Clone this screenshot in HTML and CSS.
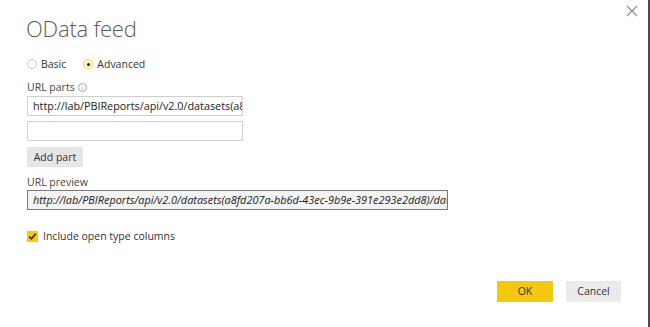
FILE: index.html
```html
<!DOCTYPE html>
<html>
<head>
<meta charset="utf-8">
<link rel="stylesheet" href="styles.css">
</head>
<body>
<div class="dialog">
  <div class="close" aria-label="Close">
    <svg width="12" height="12" viewBox="0 0 12 12"><path d="M1 1 L11 11 M11 1 L1 11" stroke="#8a8a8a" stroke-width="1.1" fill="none"/></svg>
  </div>
  <h1 class="title">OData feed</h1>
  <div class="radios">
    <label class="radio"><span class="dot"></span>Basic</label>
    <label class="radio sel"><span class="dot"><span class="inner"></span></span>Advanced</label>
  </div>
  <div class="label">URL parts <span class="info">i</span></div>
  <div class="input">http://lab/PBIReports/api/v2.0/datasets(a8fd207a-bb6d-43ec-9b9e-391e293e2dd8)</div>
  <div class="input empty"></div>
  <div class="addpart">Add part</div>
  <div class="label preview-label">URL preview</div>
  <div class="preview">http://lab/PBIReports/api/v2.0/datasets(a8fd207a-bb6d-43ec-9b9e-391e293e2dd8)/data</div>
  <label class="check">
    <span class="box"><svg width="11" height="11" viewBox="0 0 11 11"><path d="M2.2 5.6 L4.4 7.8 L8.8 2.8" stroke="#3a3000" stroke-width="1.6" fill="none"/></svg></span>
    Include open type columns
  </label>
  <div class="footer">
    <div class="btn ok">OK</div>
    <div class="btn cancel">Cancel</div>
  </div>
</div>
</body>
</html>
```

FILE: styles.css
```css
html, body {
  margin: 0;
  padding: 0;
  background: #ffffff;
}
.dialog {
  position: relative;
  width: 650px;
  height: 327px;
  box-sizing: border-box;
  border-right: 2px solid #4a4a4a;
  padding: 0 0 0 27px;
  font-family: "Open Sans", "Noto Sans", sans-serif;
  font-size: 10.5px;
  color: #333333;
  display: flex;
  flex-direction: column;
  align-items: flex-start;
}
.close {
  position: absolute;
  top: 5px;
  right: 10px;
  width: 12px;
  height: 12px;
}
.close svg { display: block; }
.title {
  margin: 13px 0 0 -1px;
  font-weight: 300;
  font-size: 22px;
  line-height: 30px;
  color: #5a5a5a;
  letter-spacing: -0.2px;
}
.radios {
  display: flex;
  gap: 17px;
  margin-top: 14px;
  height: 14px;
  align-items: center;
}
.radio {
  display: flex;
  align-items: center;
  gap: 4px;
  color: #333;
}
.dot {
  width: 8px;
  height: 8px;
  border-radius: 50%;
  border: 1px solid #c8c8c8;
  background: #fff;
  display: flex;
  align-items: center;
  justify-content: center;
}
.radio.sel .dot {
  border-color: #f2d64b;
  background: #fff8d0;
}
.inner {
  width: 3px;
  height: 3px;
  border-radius: 50%;
  background: #222;
}
.label {
  margin-top: 9px;
  height: 15px;
  line-height: 15px;
  display: flex;
  align-items: center;
  gap: 3px;
  color: #444;
}
.info {
  width: 7px;
  height: 7px;
  border: 1px solid #8fa8bf;
  border-radius: 50%;
  font-size: 6px;
  line-height: 7px;
  text-align: center;
  color: #7f99b2;
  font-family: "DejaVu Sans", sans-serif;
}
.input {
  margin-top: 1px;
  width: 216px;
  height: 20px;
  box-sizing: border-box;
  border: 1px solid #cfcfcf;
  padding: 0 0 0 5px;
  line-height: 18px;
  font-size: 10.8px;
  white-space: nowrap;
  overflow: hidden;
  color: #222;
}
.input.empty {
  margin-top: 5px;
}
.addpart {
  margin-top: 6px;
  width: 56px;
  height: 20px;
  line-height: 20px;
  background: #e6e6e6;
  text-align: center;
  color: #333;
}
.preview-label {
  margin-top: 8px;
}
.preview {
  margin-top: 0px;
  width: 421px;
  height: 20px;
  box-sizing: border-box;
  border: 1px solid #7a7a7a;
  background: #f3f3f3;
  padding-left: 5px;
  line-height: 18px;
  font-size: 10.9px;
  font-style: italic;
  white-space: nowrap;
  overflow: hidden;
  color: #222;
}
.check {
  margin-top: 19px;
  display: flex;
  align-items: center;
  gap: 5px;
  height: 14px;
  color: #333;
}
.box {
  width: 11px;
  height: 11px;
  background: #f2c811;
  display: block;
}
.box svg { display: block; }
.footer {
  margin-top: auto;
  margin-bottom: 25px;
  align-self: flex-end;
  margin-right: 27px;
  display: flex;
  gap: 13px;
}
.btn {
  width: 56px;
  height: 21px;
  line-height: 21px;
  text-align: center;
  font-size: 10.5px;
}
.ok {
  background: #f2c811;
  color: #333;
}
.cancel {
  width: 55px;
  background: #ebebeb;
  color: #333;
}
```
